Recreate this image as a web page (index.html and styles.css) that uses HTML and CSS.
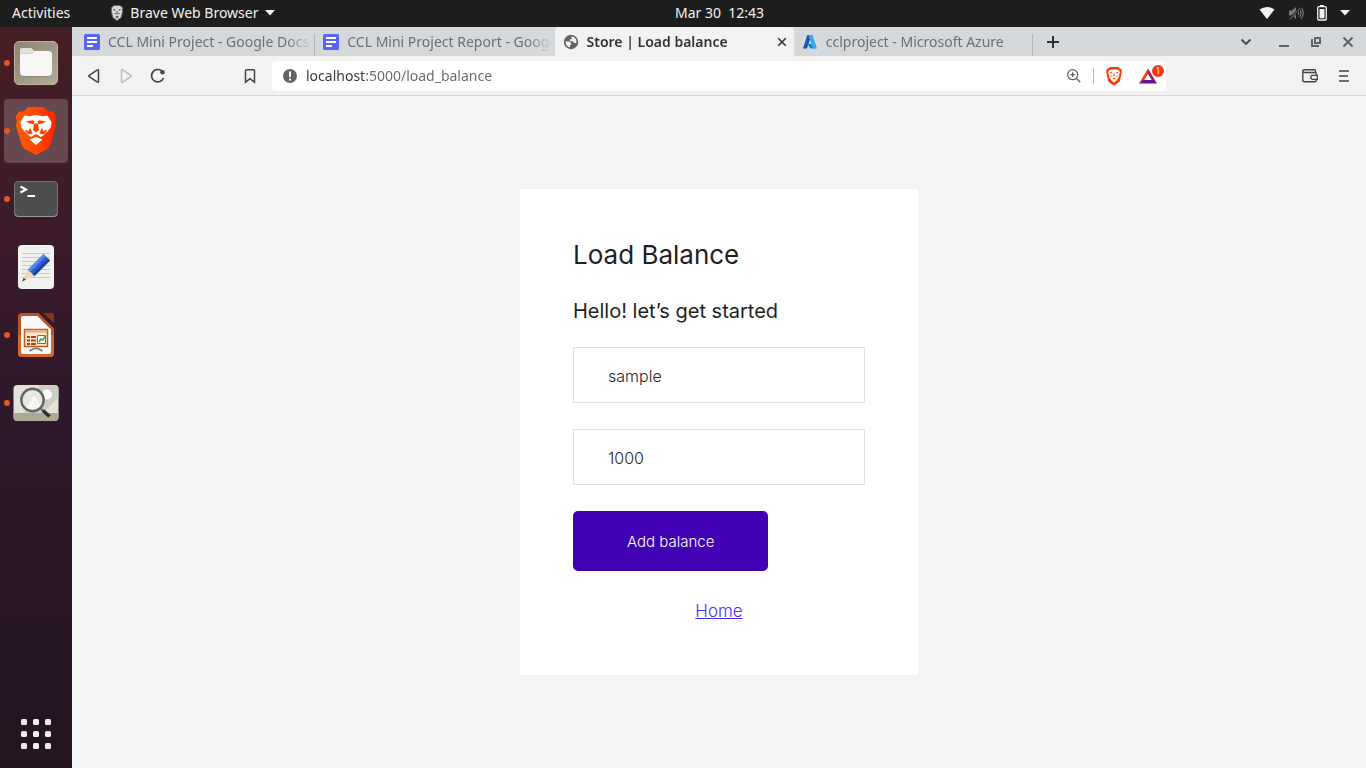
FILE: index.html
```html
<!DOCTYPE html>
<html lang="en">
<head>
<meta charset="utf-8">
<title>Store | Load balance</title>
<link rel="stylesheet" href="styles.css">
</head>
<body>
<div class="desktop">
  <header class="topbar">
    <div class="topbar-left">
      <button class="topbar-button" type="button">Activities</button>
      <button class="topbar-button app-menu" type="button">
        <svg width="14" height="16" viewBox="0 0 14 16"><path d="M4 .5h6l1.300 1.300 1.500 1-.5 2.200.4 1-1.500 6.500L7 15.500 2.800 12.500 1.300 6l.4-1-.5-2.200 1.500-1z" fill="#d8d8d8" stroke="#666" stroke-width="1"/><path d="M3.300 4.500l2.200.8M10.700 4.500l-2.200.8M4.500 8l1 1.200M9.500 8l-1 1.200M5.800 11.800h2.400L7 12.600zM7 6.200v3.300" fill="none" stroke="#404040" stroke-width="1"/></svg>
        <span>Brave Web Browser</span>
        <svg width="10" height="6" viewBox="0 0 10 6"><path d="M0 0h10L5 5.500z" fill="#f2f2f2"/></svg>
      </button>
    </div>
    <button class="topbar-button clock" type="button">Mar 30&nbsp; 12:43</button>
    <button class="topbar-button tray" type="button" aria-label="System menu">
      <svg width="16" height="14" viewBox="0 0 16 14"><path d="M.5 3.500Q8-1.500 15.500 3.500L8 13z" fill="#f2f2f2"/></svg>
      <svg width="16" height="16" viewBox="0 0 16 16"><path d="M1 5.500h3L8 2v12l-4-3.500H1z" fill="#777"/><path d="M10 6q1.500 2 0 4M11.500 4q3 4 0 8M13 2q4.500 6 0 12" fill="none" stroke="#777" stroke-width="1.200"/><path d="M2 14L13 2" stroke="#1d1d1d" stroke-width="2.400"/><path d="M2 14.500L12 3" stroke="#777"/></svg>
      <svg width="10" height="16" viewBox="0 0 10 16"><path d="M3 0h4v2H3z" fill="#f2f2f2"/><rect x=".7" y="1.700" width="8.600" height="13.300" rx="1" fill="none" stroke="#f2f2f2" stroke-width="1.300"/><path d="M2.500 4h5v9.300h-5z" fill="#f2f2f2"/></svg>
      <svg width="10" height="6" viewBox="0 0 10 6"><path d="M0 0h10L5 5.500z" fill="#f2f2f2"/></svg>
    </button>
  </header>

  <nav class="dock" aria-label="Applications">
    <button class="dock-item running" type="button" aria-label="Files">
      <svg width="48" height="48" viewBox="0 0 48 48"><defs><linearGradient id="files" x1="0" y1="0" x2="1" y2="1"><stop offset="0" stop-color="#8c8470"/><stop offset="1" stop-color="#b2ab98"/></linearGradient></defs><rect x="2.500" y="2.500" width="43" height="43" rx="4.500" fill="url(#files)" stroke="#beb7a5"/><path d="M8 14v-3q0-2 2-2h8.500q1 0 2 1l3 3.500V20H8z" fill="#e4dfd2"/><path d="M8 15.500q0-1 1-1h11l2.500-2.500H37q3 0 3 3v18.500q0 4-4 4H12q-4 0-4-4z" fill="#7e7765"/><path d="M8 14.500h12l2.500-2.500H37q3 0 3 3v18q0 4-4 4H12q-4 0-4-4z" fill="#f8f7f5"/></svg>
    </button>
    <button class="dock-item running focused" type="button" aria-label="Brave Web Browser">
      <svg width="48" height="48" viewBox="0 0 48 48"><defs><linearGradient id="brave"><stop offset="0" stop-color="#ff5a00"/><stop offset=".5" stop-color="#ff4a00"/><stop offset="1" stop-color="#ff2200"/></linearGradient></defs><path d="M16 0h16l4 4.500h5l3.500 5L43 14l1.200 4-6 20q-1 2.500-3 4L24 48l-11.200-6q-2-1.500-3-4l-6-20L5 14 3.500 9.500l3.500-5h5z" fill="url(#brave)"/><path d="M12.500 8.500l5 .8L24 8l6.500 1.300 5-.8 4.200 7-1.200 5.500-6.500 7-3 2-5-3-5 3-3-2-6.500-7-1.200-5.500z" fill="#fff"/><path d="M14 14.500l6.500-1.300 2.200 1-1.200 3-3.800-.7zM34 14.500l-6.500-1.300-2.200 1 1.200 3 3.800-.7zM22 16.500h4l1 6.500-3 2.500-3-2.500zM18 20.500l2.700 6-4.700 1-3-4zM30 20.500l-2.700 6 4.700 1 3-4z" fill="#ff4500"/><path d="M10.500 18l8 2.500-2.500 4zM37.500 18l-8 2.500 2.500 4z" fill="#fff"/><path d="M17.500 32.500L24 30l6.500 2.500L24 38z" fill="#fff"/></svg>
    </button>
    <button class="dock-item running" type="button" aria-label="Terminal">
      <svg width="48" height="48" viewBox="0 0 48 48"><rect x="2.500" y="6.500" width="43" height="35" rx="3.500" fill="#4e4e4e" stroke="#737373"/><path d="M3 39q0 2 3 2.500h36q3-.5 3-2.500" fill="none" stroke="#969696"/><path d="M8.500 11.500l5.500 3-5.500 3M15.500 21h7.500" fill="none" stroke="#fff" stroke-width="2"/></svg>
    </button>
    <button class="dock-item" type="button" aria-label="Text Editor">
      <svg width="48" height="48" viewBox="0 0 48 48"><rect x="6" y="2" width="36" height="44" rx="4" fill="#f1f1f0"/><path d="M10 10.500h28M10 14.500h28M10 18.500h28M10 22.500h28M10 26.500h28M10 30.500h28M10 34.500h28" stroke="#c9c9c9"/><path d="M10 38.500l6-12 6.500 6.500z" fill="#f6d4ad"/><path d="M10 38.500l1.800-3.700 2 2z" fill="#39424c"/><path d="M16 26.500L31.500 11l6.500 6.500L22.500 33z" fill="#2b5fd8"/><path d="M16 26.500L31.500 11l2.200 2.200-15.500 15.500z" fill="#568bf0"/><path d="M20.500 31l15.500-15.500 2 2L22.500 33z" fill="#1d419f"/></svg>
    </button>
    <button class="dock-item running" type="button" aria-label="LibreOffice Impress">
      <svg width="48" height="48" viewBox="0 0 48 48"><path d="M10 2h16.500L42 17.500V42q0 4-4 4H10q-4 0-4-4V6q0-4 4-4z" fill="#b75420"/><path d="M6 24h36v18q0 4-4 4H10q-4 0-4-4z" fill="#d4672d"/><path d="M11 5h14.500L39 18.500V41q0 2-2 2H11q-2 0-2-2V7q0-2 2-2z" fill="#fafafa"/><path d="M31 2h9q2 0 2 2v8z" fill="#853809"/><path d="M12.500 18.500h23v17h-23z" fill="#ffe7ca" stroke="#c05b26" stroke-width="1.500"/><path d="M13 20.500h22" stroke="#e9a87c" stroke-width="2"/><path d="M15 26h3M15 29.500h3M15 33h3M19 26h5M19 29.500h5M19 33h5" stroke="#9e4719" stroke-width="2"/><path d="M25.500 24.500h8v8h-8z" fill="#fff" stroke="#6c706c"/><path d="M27 31l2-3 2 1 2-4" fill="none" stroke="#38a339" stroke-width="1.400"/><path d="M24 36.500v2M17.500 40l4.500-2.500h4l4.500 2.500" fill="none" stroke="#777" stroke-width="1.600"/></svg>
    </button>
    <button class="dock-item running" type="button" aria-label="Image Viewer">
      <svg width="48" height="48" viewBox="0 0 48 48"><rect x="1.500" y="6" width="45" height="36" rx="4" fill="#e3e3dc"/><path d="M27 6h15q4.500 0 4.500 4v8L31 34H12z" fill="#cccdc5"/><path d="M1.500 34h45v4q0 4-4 4h-37q-4 0-4-4z" fill="#aaa993"/><circle cx="35" cy="15.500" r="5" fill="#fafafa"/><circle cx="20.500" cy="21" r="11" fill="#e6e7e2"/><path d="M13 30l9-14 8 12-5 4z" fill="#f6f6f2"/><circle cx="20.500" cy="21" r="11.200" fill="none" stroke="#63635f" stroke-width="2.400"/><path d="M28.500 29.500l3 2.500" stroke="#666" stroke-width="2"/><path d="M31 31.500l6.500 6" stroke="#333" stroke-width="3.600"/></svg>
    </button>
    <button class="dock-item show-apps" type="button" aria-label="Show Applications">
      <svg width="32" height="32" viewBox="0 0 32 32" fill="#f0efed"><rect x="1" y="1" width="6" height="6" rx="1.500"/><rect x="13" y="1" width="6" height="6" rx="1.500"/><rect x="25" y="1" width="6" height="6" rx="1.500"/><rect x="1" y="13" width="6" height="6" rx="1.500"/><rect x="13" y="13" width="6" height="6" rx="1.500"/><rect x="25" y="13" width="6" height="6" rx="1.500"/><rect x="1" y="25" width="6" height="6" rx="1.500"/><rect x="13" y="25" width="6" height="6" rx="1.500"/><rect x="25" y="25" width="6" height="6" rx="1.500"/></svg>
    </button>
  </nav>

  <div class="browser">
    <div class="tabstrip">
      <div class="tabs">
        <button class="tab divided" type="button">
          <svg width="16" height="16" viewBox="0 0 16 16"><rect width="16" height="16" rx="1.500" fill="#5965f6"/><path d="M3 4h10M3 8h10M3 12h6" stroke="#fff" stroke-width="2"/></svg>
          <span class="tab-title">CCL Mini Project - Google Docs</span>
        </button>
        <button class="tab" type="button">
          <svg width="16" height="16" viewBox="0 0 16 16"><rect width="16" height="16" rx="1.500" fill="#5965f6"/><path d="M3 4h10M3 8h10M3 12h6" stroke="#fff" stroke-width="2"/></svg>
          <span class="tab-title">CCL Mini Project Report - Google Docs</span>
        </button>
        <div class="tab active">
          <svg width="16" height="16" viewBox="0 0 16 16"><circle cx="8" cy="8" r="7.200" fill="#5f6368"/><path d="M2.500 7.500h3.700l2 1.500v1.700H7v2.600Q2.800 12.500 2.500 7.500zM8.200 2.500Q12.500 2.500 13.500 7l-.3 2H11L9.700 7.300H6.800V5.200h2z" fill="#f2f2f2"/></svg>
          <span class="tab-title">Store | Load balance</span>
          <button class="tab-close" type="button" aria-label="Close tab"><svg width="10" height="10" viewBox="0 0 10 10"><path d="M1.200 1.200l7.600 7.600M8.800 1.200L1.200 8.800" stroke="#333" stroke-width="1.600"/></svg></button>
        </div>
        <button class="tab divided" type="button">
          <svg width="16" height="16" viewBox="0 0 16 16"><path d="M5.300 1h4.200L5 14.500H1z" fill="#2054b5"/><path d="M5.500 10h6l2 4.500H8.500z" fill="#1877cf"/><path d="M6.500 1h4.200L15 14.500h-4.200z" fill="#31aff2"/></svg>
          <span class="tab-title">cclproject - Microsoft Azure</span>
        </button>
      </div>
      <button class="icon-button new-tab" type="button" aria-label="New tab"><svg width="12" height="12" viewBox="0 0 12 12"><path d="M6 0v12M0 6h12" stroke="#333" stroke-width="2"/></svg></button>
      <div class="window-controls">
        <button class="icon-button" type="button" aria-label="Search tabs"><svg width="12" height="12" viewBox="0 0 12 12"><path d="M1.500 3.500L6 8l4.500-4.500" fill="none" stroke="#444" stroke-width="1.800"/></svg></button>
        <button class="icon-button" type="button" aria-label="Minimize"><svg width="12" height="12" viewBox="0 0 12 12"><path d="M1 10h10" stroke="#5f6368" stroke-width="2"/></svg></button>
        <button class="icon-button" type="button" aria-label="Restore"><svg width="12" height="12" viewBox="0 0 12 12"><path d="M5 2h5v5H5zM2 3v7h7" fill="none" stroke="#5f6368" stroke-width="2"/></svg></button>
        <button class="icon-button" type="button" aria-label="Close window"><svg width="12" height="12" viewBox="0 0 12 12"><path d="M1.500 1.500l9 9M10.500 1.500l-9 9" stroke="#5f6368" stroke-width="2"/></svg></button>
      </div>
    </div>

    <div class="toolbar">
      <div class="nav-buttons">
        <button class="icon-button" type="button" aria-label="Back"><svg width="16" height="16" viewBox="0 0 16 16"><path d="M12.500 2.500v11q0 1.200-1 .5L3.200 8.600q-.8-.6 0-1.200L11.500 2q1-.7 1 .5z" fill="none" stroke="#444" stroke-width="1.500"/></svg></button>
        <button class="icon-button" type="button" aria-label="Forward"><svg width="16" height="16" viewBox="0 0 16 16"><path d="M3.500 2.500v11q0 1.200 1 .5l8.300-5.400q.8-.6 0-1.200L4.500 2q-1-.7-1 .5z" fill="none" stroke="#bcbcbc" stroke-width="1.500"/></svg></button>
        <button class="icon-button" type="button" aria-label="Reload"><svg width="16" height="16" viewBox="0 0 16 16"><path d="M11.500 2.800A6.200 6.200 0 1 0 13.500 10" fill="none" stroke="#444" stroke-width="1.700"/><circle cx="12.500" cy="4.300" r="2.200" fill="#444"/></svg></button>
      </div>
      <button class="icon-button" type="button" aria-label="Bookmark"><svg width="16" height="16" viewBox="0 0 16 16"><path d="M4.500 1.800h7q1 0 1 1v11.400L8 10.700l-4.500 3.500V2.800q0-1 1-1z" fill="none" stroke="#444" stroke-width="1.500"/></svg></button>
      <div class="omnibox">
        <svg width="16" height="16" viewBox="0 0 16 16"><circle cx="8" cy="8" r="7" fill="#5f6368"/><path d="M8 3.500V9M8 10.500v2" stroke="#fff" stroke-width="2"/></svg>
        <input class="url" type="text" aria-label="Address" value="localhost:5000/load_balance">
        <button class="icon-button" type="button" aria-label="Zoom"><svg width="16" height="16" viewBox="0 0 16 16"><circle cx="6.700" cy="6.700" r="5" fill="none" stroke="#5f6368" stroke-width="1.200"/><path d="M10.300 10.300l4 4M6.700 4.300v4.800M4.300 6.700h4.800" stroke="#5f6368" stroke-width="1.300"/></svg></button>
        <span class="separator"></span>
        <button class="icon-button shield" type="button" aria-label="Brave Shields"><svg width="18" height="20" viewBox="0 0 18 20"><path d="M5 1h8l2 1.500L17 4l-.5 3-1.500 8-2 2-4 2.500L5 17l-2-2-1.500-8L1 4l2-1.500z" fill="#fb3b08"/><path d="M4.500 4l3-.5h3l3 .5 1.300 2-1 5-2.300 3.500L9 16.500l-2.500-2L4.200 11l-1-5z" fill="#fff"/><path d="M5 6.500l2 .5M13 6.500l-2 .5M6 9.500v1.500M12 9.500v1.500M9 7.500v3M7.500 12l1.500.8 1.500-.8" fill="none" stroke="#fb3b08"/></svg></button>
        <button class="icon-button rewards" type="button" aria-label="Brave Rewards, 1 notification"><svg width="18" height="16" viewBox="0 0 18 16"><path d="M9 .5v5.700L5 13l-5 2.500z" fill="#ff3a1a"/><path d="M9 .5L18 15.500 13 13 9 6.200z" fill="#9e1f63"/><path d="M0 15.500L4.500 12h9l4.500 3.500z" fill="#5f1699"/><path d="M9 6l3.500 6h-7z" fill="#fff"/></svg><span class="badge">1</span></button>
      </div>
      <div class="toolbar-end">
        <button class="icon-button" type="button" aria-label="Wallet"><svg width="16" height="16" viewBox="0 0 16 16"><path d="M13.500 5V3q0-1.200-1.200-1.200H2.500Q.8 1.800.8 3.200V12q0 1.800 1.800 1.800h10q1.700 0 1.700-1.800V6q0-1.500-1.300-1.500H2.500Q.8 4.500.8 3.200" fill="none" stroke="#444" stroke-width="1.400"/><path d="M15.300 7.300h-4.500a2 2 0 0 0 0 4h4.500z" fill="#f2f2f2" stroke="#444" stroke-width="1.300"/></svg></button>
        <button class="icon-button" type="button" aria-label="Menu"><svg width="16" height="16" viewBox="0 0 16 16"><path d="M3 3h10M3 8h9M3 13h10" stroke="#444" stroke-width="1.700"/></svg></button>
      </div>
    </div>

    <main class="page">
      <form class="card">
        <h1 class="card-title">Load Balance</h1>
        <h2 class="card-subtitle">Hello! let’s get started</h2>
        <div class="fields">
          <input class="field" type="text" aria-label="Username" value="sample">
          <input class="field" type="text" inputmode="numeric" aria-label="Amount" value="1000">
          <button class="submit" type="button">Add balance</button>
        </div>
        <a class="home-link" href="#">Home</a>
      </form>
    </main>
  </div>
</div>
</body>
</html>
```
FILE: styles.css
```css
* {
  box-sizing: border-box;
}

body {
  margin: 0;
  font-family: "Noto Sans", "Open Sans", sans-serif;
  font-size: 14px;
}

button,
input {
  margin: 0;
  padding: 0;
  border: 0;
  background: none;
  color: inherit;
  font: inherit;
}

svg {
  display: block;
  flex: none;
}

.desktop {
  display: grid;
  grid-template: 27px 1fr / 72px minmax(0, 1fr);
  min-height: 100vh;
}

/* System bar */
.topbar {
  grid-column: 1 / -1;
  display: grid;
  grid-template-columns: calc(50% - 8px) auto 1fr;
  align-items: center;
  padding-bottom: 2px;
  background: #1d1d1d;
  color: #f2f2f2;
}

.topbar-left {
  display: flex;
  gap: 40px;
  padding-left: 12px;
}

.topbar-button {
  display: flex;
  align-items: center;
  white-space: nowrap;
}

.app-menu {
  gap: 6px;
}

.tray {
  justify-self: end;
  gap: 13px;
  padding-right: 16px;
}

/* Dock */
.dock {
  display: flex;
  flex-direction: column;
  align-items: center;
  gap: 4px;
  padding: 4px 0 2px;
  background: linear-gradient(#471f24, #3a1a2b 30%, #2f182c 50%, #241520);
}

.dock-item {
  position: relative;
  display: grid;
  place-items: center;
  width: 64px;
  height: 64px;
  border-radius: 4px;
}

.running::before {
  content: "";
  position: absolute;
  left: 0;
  width: 6px;
  height: 6px;
  border-radius: 50%;
  background: #e95420;
}

.focused {
  background: #66484f;
}

.show-apps {
  margin-top: auto;
}

/* Browser window */
.browser {
  display: flex;
  flex-direction: column;
  background: #f4f5f7;
}

.tabstrip {
  display: flex;
  align-items: center;
  height: 29px;
  padding: 0 10px 0 4px;
  background: #d5d9dc;
}

.tabs {
  display: flex;
  flex: 0 1 957px;
  min-width: 0;
  align-self: stretch;
}

.tab {
  position: relative;
  display: flex;
  flex: 1 1 0;
  min-width: 0;
  align-items: center;
  gap: 8px;
  padding: 0 4px 0 8px;
  color: #6c6e70;
  text-align: left;
}

.divided::after {
  content: "";
  position: absolute;
  top: 7px;
  right: 0;
  bottom: 0;
  width: 1px;
  background: #b3b6b8;
}

.tab-title {
  flex: 1;
  overflow: hidden;
  white-space: nowrap;
  mask-image: linear-gradient(90deg, #000 calc(100% - 24px), transparent);
}

.active {
  border-radius: 4px 4px 0 0;
  background: #f2f2f2;
  color: #333;
  font-weight: 600;
}

.icon-button,
.tab-close {
  display: grid;
  place-items: center;
  flex: none;
}

.tab-close {
  width: 16px;
  height: 16px;
}

.new-tab {
  margin-left: 14px;
}

.window-controls {
  display: flex;
  gap: 20px;
  margin-left: auto;
  padding-right: 2px;
}

.window-controls .icon-button:first-child {
  margin-right: 6px;
}

.toolbar {
  display: flex;
  align-items: center;
  height: 40px;
  padding: 0 14px;
  border-bottom: 1px solid #d6d7d9;
  background: #f2f2f2;
}

.nav-buttons {
  display: flex;
  gap: 16px;
  margin-right: 76px;
}

.omnibox {
  display: flex;
  flex: 1;
  min-width: 0;
  align-items: center;
  height: 30px;
  margin: 0 136px 0 14px;
  padding: 0 9px 0 10px;
  border-radius: 4px;
  background: #fff;
}

.url {
  flex: 1;
  min-width: 0;
  margin-left: 8px;
  background: linear-gradient(90deg, #333 60px, #686868 60px) text;
  color: transparent;
}

.separator {
  width: 1px;
  height: 16px;
  margin: 0 11px;
  background: #bbb;
}

.rewards {
  position: relative;
  margin-left: 16px;
}

.badge {
  position: absolute;
  top: -3px;
  left: 13px;
  width: 12px;
  height: 12px;
  border-radius: 50%;
  background: #fb3812;
  color: #fff;
  font-size: 8px;
  line-height: 12px;
  text-align: center;
}

.toolbar-end {
  display: flex;
  gap: 18px;
}

/* Page */
.page {
  display: grid;
  flex: 1;
  place-items: center;
  padding: 24px;
  color: #1f1f1f;
  font-family: Inter, "Liberation Sans", sans-serif;
}

.card {
  display: flex;
  flex-direction: column;
  width: 100%;
  max-width: 398px;
  padding: 48px 53px 52px;
  background: #fff;
}

.card-title {
  margin: 0 0 24px;
  font-size: 26px;
  font-weight: 400;
  line-height: 36px;
}

.card-subtitle {
  margin: 0 0 22px;
  font-size: 20px;
  font-weight: 400;
  line-height: 28px;
}

.fields {
  display: flex;
  flex-direction: column;
  align-items: flex-start;
  gap: 26px;
}

.field {
  width: 100%;
  height: 56px;
  padding: 2px 34px 0;
  border: 1px solid #dee0e7;
  font-size: 16px;
  font-weight: 300;
}

.submit {
  height: 60px;
  padding: 0 54px;
  border-radius: 5px;
  background: #4200b5;
  color: #fff;
  font-size: 15px;
  font-weight: 300;
}

.home-link {
  align-self: center;
  margin-top: 28px;
  color: #4b34ee;
  font-size: 17px;
  font-weight: 300;
  line-height: 24px;
}
```
